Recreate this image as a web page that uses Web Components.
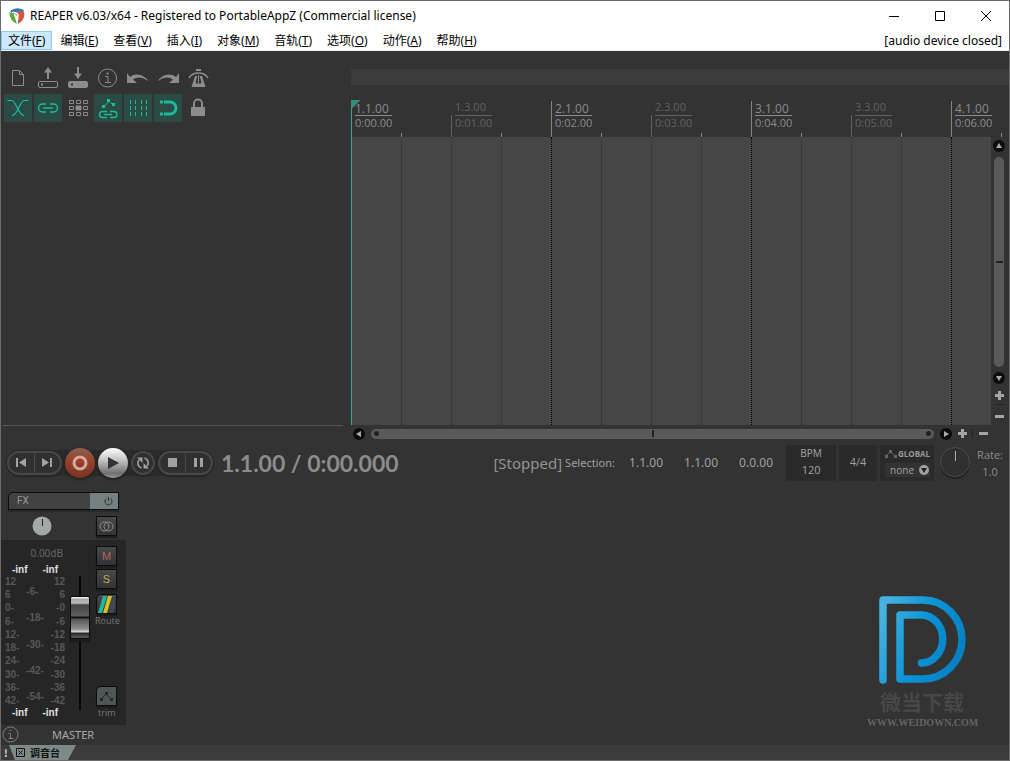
<!DOCTYPE html>
<html lang="zh-CN">
<head>
<meta charset="utf-8">
<title>REAPER</title>
<style>
html, body { height: 100%; }
body { margin: 0; background: #333; font: 12px/16px "Noto Sans", "Noto Sans CJK SC", sans-serif; }
</style>
</head>
<body>
<reaper-window></reaper-window>
<script>
const RESET = `
  *, *::before, *::after { box-sizing: border-box; }
  button { margin: 0; padding: 0; border: 0; background: none; color: inherit; font: inherit; }
  svg { display: block; }
`;

function define(name, css, html) {
  const template = document.createElement('template');
  template.innerHTML = `<style>${RESET}${css}</style>${html}`;
  customElements.define(name, class extends HTMLElement {
    constructor() {
      super();
      this.attachShadow({ mode: 'open' }).append(template.content.cloneNode(true));
    }
  });
}

/* Title bar */
define('title-bar', `
  :host { display: flex; align-items: center; height: 30px; padding-left: 8px; background: #fff; color: #000; }
  h1 { flex: 1; margin: 0 0 0 5px; font: inherit; white-space: nowrap; }
  button { display: grid; place-items: center; width: 46px; height: 28px; }
`, `
  <svg width="16" height="18" viewBox="0 0 16 18">
    <path d="M1 4Q7-1 15 3L14 6Q8 3 4 8Z" fill="#2f7fa8"/>
    <path d="M0 5L5 8L8 17Q1 14 0 5Z" fill="#58a832"/>
    <path d="M5 6Q10 3 15 5Q17 12 9 17L9 10Z" fill="#d45745"/>
    <path d="M3 5.500Q8 5 9 8L8.500 13" fill="none" stroke="#fff" stroke-width="1.500"/>
  </svg>
  <h1><slot></slot></h1>
  <button aria-label="最小化"><svg width="10" height="10"><path d="M0 5.500h10" stroke="#000"/></svg></button>
  <button aria-label="最大化"><svg width="10" height="10"><path d="M.5.5h9v9h-9z" fill="none" stroke="#000"/></svg></button>
  <button aria-label="关闭"><svg width="10" height="10"><path d="M0 0l10 10M10 0L0 10" stroke="#000"/></svg></button>
`);

/* Menu */
define('menu-item', `
  :host { display: block; }
  button { height: 19px; padding: 0 6px; border: 1px solid transparent; line-height: 17px; white-space: nowrap; }
  :host([active]) button { background: #cce8ff; border-color: #90c8f6; }
`, `<button><slot></slot></button>`);

define('menu-bar', `
  :host { display: flex; justify-content: space-between; height: 20px; background: #fff; border-bottom: 1px solid #f0f0f0; color: #000; }
  nav { display: flex; gap: 1px; }
  span { padding-right: 7px; line-height: 19px; }
`, `<nav>
  <menu-item active>文件(<u>F</u>)</menu-item><menu-item>编辑(<u>E</u>)</menu-item>
  <menu-item>查看(<u>V</u>)</menu-item><menu-item>插入(<u>I</u>)</menu-item>
  <menu-item>对象(<u>M</u>)</menu-item><menu-item>音轨(<u>T</u>)</menu-item>
  <menu-item>选项(<u>O</u>)</menu-item><menu-item>动作(<u>A</u>)</menu-item>
  <menu-item>帮助(<u>H</u>)</menu-item>
  </nav><span>[audio device closed]</span>`);

/* Main toolbar */
const icons = [
  ['新建', '', '<path d="M8.500 6.500h7l4 4v11h-11zM15.500 6.500v4h4"/>'],
  ['打开', '', '<path d="M14 15V6" stroke-width="2"/><path d="M10 8.500L14 3l4 5.500z" fill="currentColor" stroke="none"/><rect x="4.500" y="17.500" width="19" height="6" rx="1.500"/><path d="M7 20.500h2" stroke-width="2"/>'],
  ['保存', '', '<path d="M14 3v9" stroke-width="2"/><path d="M10 9.500h8L14 15z" fill="currentColor" stroke="none"/><rect x="4.500" y="17.500" width="19" height="6" rx="1.500" fill="currentColor"/><path d="M7 20.500h2" stroke="#333" stroke-width="2"/>'],
  ['工程设置', '', '<circle cx="13.500" cy="14" r="9"/><path d="M11 12.500h3v6M11 18.500h6"/><path d="M12.500 9.500h2" stroke-width="2"/>'],
  ['撤销', '', '<path d="M3 9v10h10l-4-3.500c4-3 10-3 15.500 2C21 11 12 8 6 13z" fill="currentColor" stroke="none"/>'],
  ['重做', '', '<path d="M25 9v10H15l4-3.500c-4-3-10-3-15.500 2C7 11 16 8 22 13z" fill="currentColor" stroke="none"/>'],
  ['节拍器', '', '<path d="M12 5h5v2h-5z" fill="currentColor" stroke="none"/><path d="M5 14Q8 9 14.500 9T24 14" stroke-width="1.500"/><path d="M11 12h7l3.500 11h-14z" fill="currentColor" stroke="none"/><path d="M14 11h1l2 8h-5z" fill="#333" stroke="#333"/><path d="M14.500 11v8"/>'],
  ['自动交叉淡化', 'on', '<path d="M3.500 6.500H8C12 6.500 14 21.500 20 21.500M24.500 6.500H20C16 6.500 14 21.500 8 21.500" stroke-width="1.200"/>'],
  ['项目编组', 'on', '<path d="M12 10H8.500a4 4 0 0 0 0 8H12M16 10h3.500a4 4 0 0 1 0 8H16M9 14h10" stroke-width="1.500"/>'],
  ['波纹编辑', '', '<path d="M5.500 6.500h4v3h-4zM12.500 6.500h4v3h-4zM19.500 6.500h4v3h-4zM5.500 12.500h4v3h-4zM19.500 12.500h4v3h-4zM5.500 18.500h4v3h-4zM12.500 18.500h4v3h-4zM19.500 18.500h4v3h-4z"/><path d="M12 12h5v4h-5z" fill="currentColor"/>'],
  ['包络随项目移动', 'on', '<path d="M10 13l5-6 4 4"/><path d="M8 11h3v3H8zM13 5h3v3h-3zM18 9h3v3h-3z" fill="currentColor" stroke="none"/><path d="M13 17.500H8.500a3 3 0 0 0 0 6H13M16 17.500h4a3 3 0 0 1 0 6h-4M10 20.500h8" stroke-width="1.300"/>'],
  ['网格线', 'on', '<path d="M6.500 6v16M11.500 6v16M17.500 6v16M22.500 6v16" stroke-dasharray="4 2"/>'],
  ['吸附', 'on', '<path d="M10 8h6a6 6 0 0 1 0 12h-6" stroke-width="3"/><path d="M6 8h3M6 20h3" stroke-width="3"/>'],
  ['锁定', '', '<path d="M7 13h14v9H7z" fill="currentColor" stroke="none"/><path d="M10 13V9.500a4 4 0 0 1 8 0V13" stroke-width="2"/>'],
];
define('tool-bar', `
  :host { display: grid; grid-template-columns: repeat(7, 28px); gap: 2px; padding: 13px 0 0 3px; color: #8c8c8c; }
  button { width: 28px; height: 28px; }
  .on { background: #2b4c45; color: #1abc9c; }
`, icons.map(([label, cls, art]) =>
  `<button class="${cls}" aria-label="${label}"><svg width="28" height="28" fill="none" stroke="currentColor">${art}</svg></button>`).join(''));

/* Time ruler: one cell for every two beats */
define('ruler-mark', `
  :host { flex: 0 0 100px; display: flex; flex-direction: column; justify-content: flex-end; padding: 0 0 7px 4px; color: #626262; white-space: nowrap;
    background: linear-gradient(#888,#888) 50px 100% / 1px 4px no-repeat, linear-gradient(#606060,#606060) 0 100% / 1px 22px no-repeat; }
  :host([major]) { color: #8a8a8a; background: linear-gradient(#888,#888) 50px 100% / 1px 4px no-repeat, linear-gradient(#808080,#808080) 0 100% / 1px 36px no-repeat; }
  :host([start]) { background: linear-gradient(135deg,#3c8c7d 50%,transparent 50%) 0 15px / 9px 9px no-repeat, linear-gradient(#888,#888) 50px 100% / 1px 4px no-repeat, linear-gradient(#3fa08e,#3fa08e) 0 100% / 1px 37px no-repeat; }
  b { width: 37px; border-bottom: 1px solid currentColor; font: 11px/13px "Open Sans", sans-serif; padding-bottom: 2px; }
  :host([major]) b { font-size: 12px; padding-bottom: 0; }
  span { font: 11px/14px "Open Sans", sans-serif; }
`, `<b><slot></slot></b><span><slot name="time"></slot></span>`);

define('time-ruler', `
  :host { display: flex; height: 52px; overflow: hidden; }
`, ['1.1.00', '1.3.00', '2.1.00', '2.3.00', '3.1.00', '3.3.00', '4.1.00'].map((bar, i) =>
  `<ruler-mark ${i % 2 ? '' : 'major'} ${i ? '' : 'start'}>${bar}<span slot="time">0:0${i}.00</span></ruler-mark>`).join(''));

define('arrange-view', `
  :host { display: flex; overflow: hidden; background: #464646; }
  i { flex: 0 0 50px; border-left: 1px dotted #2b2b2b; }
  i:nth-of-type(4n+1) { border-left-color: #000; }
  i:first-of-type { border-left: 1px solid #3fa08e; }
`, '<i></i>'.repeat(13));

/* Scrollbars with zoom buttons */
define('scroll-strip', `
  :host { display: flex; align-items: center; }
  :host([vertical]) { flex-direction: column; }
  button { flex: none; display: grid; place-items: center; width: 12px; height: 12px; }
  .arrow { border-radius: 50%; background: #0c0c0c; }
  .arrow svg { fill: #aaa; }
  .bar { flex: 1; display: flex; align-items: center; justify-content: space-between; height: 10px; margin: 0 6px; padding: 0 3px; border-radius: 5px; background: #5a5a5a; }
  .bar i { width: 5px; height: 5px; border-radius: 50%; background: #222; }
  .bar i:nth-child(2) { width: 2px; height: 7px; border-radius: 0; }
  .prev svg { transform: rotate(-90deg); }
  .next svg { transform: rotate(90deg); }
  .plus { margin-left: 4px; }
  .sep { width: 1px; height: 9px; margin: 0 4px; background: #222; }
  :host([vertical]) .bar { flex-direction: column; width: 10px; height: auto; margin: 5px 0; padding: 3px 0; }
  :host([vertical]) .bar i { visibility: hidden; }
  :host([vertical]) .bar i:nth-child(2) { visibility: visible; width: 7px; height: 2px; }
  :host([vertical]) .prev svg { transform: none; }
  :host([vertical]) .next svg { transform: rotate(180deg); }
  :host([vertical]) .plus { margin: 5px 0 0; }
  :host([vertical]) .sep { width: 9px; height: 1px; margin: 3px 0 5px; }
`, `
  <button class="arrow prev" aria-label="后退"><svg width="6" height="6"><path d="M3 0l3 5H0z"/></svg></button>
  <div class="bar"><i></i><i></i><i></i></div>
  <button class="arrow next" aria-label="前进"><svg width="6" height="6"><path d="M3 0l3 5H0z"/></svg></button>
  <button class="plus" aria-label="放大"><svg width="9" height="9"><path d="M3 0h3v3h3v3H6v3H3V6H0V3h3z" fill="#a5a5a5"/></svg></button>
  <span class="sep"></span>
  <button aria-label="缩小"><svg width="9" height="3"><path d="M0 0h9v3H0z" fill="#a5a5a5"/></svg></button>
`);

/* Transport */
define('transport-bar', `
  :host { display: flex; align-items: center; height: 45px; padding: 0 6px; color: #a0a0a0; white-space: nowrap; }
  .keys { display: flex; align-items: center; gap: 3px; color: #a2a2a2; background: linear-gradient(#2a2a2a,#2a2a2a) 45px center / 120px 26px no-repeat; }
  button { display: grid; place-items: center; }
  .pill { display: flex; border: 2px solid #484848; border-radius: 12px; box-shadow: 0 2px 1px #262626, 0 0 0 1px #292929; background: #303030; }
  .pill button { width: 25px; height: 20px; }
  .pill button + button { border-left: 1px solid #484848; width: 26px; }
  .round { width: 30px; height: 30px; border-radius: 50%; box-shadow: 0 1px 2px 1px #222; }
  .rec { background: linear-gradient(#8e6052, #96402c 45%, #7a3121); }
  .play { background: linear-gradient(#fff, #c4c4c4 40%, #707070 85%, #999); }
  .loop { width: 24px; height: 24px; border: 2px solid #484848; border-radius: 50%; background: #303030; box-shadow: 0 2px 1px #262626; }
  output.time { margin-left: 8px; font: bold 23px/30px "Lato", sans-serif; color: #8c8c8c; }
  .state { display: flex; align-items: center; margin-left: auto; font-size: 11px; }
  .state b { margin-right: 3px; font: 15px/20px "Noto Sans", sans-serif; color: #929292; }
  .state span { width: 64px; }
  .state output { width: 55px; font-size: 12px; }
  .state output:last-child { width: 47px; }
  .panels { display: flex; gap: 3px; }
  .box { height: 36px; border-radius: 2px; background: #2a2a2a; text-align: center; font-size: 11px; }
  .bpm { width: 50px; line-height: 18px; }
  .bpm label { display: block; font-size: 10px; line-height: 17px; }
  input { width: 40px; padding: 0; border: 0; background: none; color: inherit; font: 11px/16px "Open Sans", sans-serif; text-align: center; display: block; margin: 0 auto; height: 16px; }
  .sig { width: 38px; }
  .sig input { width: 100%; height: 34px; }
  .env { width: 54px; padding: 3px 4px 0 5px; }
  .env label { display: flex; justify-content: space-between; font: bold 8px/12px "Open Sans", sans-serif; align-items: center; color: #999; }
  .drop { display: flex; align-items: center; margin-top: 3px; padding: 0 0 0 5px; height: 14px; background: #333; }
  .drop svg { flex: none; }
  select { appearance: none; flex: 1; min-width: 0; padding: 0; border: 0; background: none; color: #a0a0a0; font: 10px/14px "Open Sans", sans-serif; }
  .knob { margin: 0 7px 0 6px; }
  .rate { text-align: center; font: 11px/17px "Open Sans", sans-serif; color: #8c8c8c; }
`, `
  <div class="keys">
    <div class="pill">
      <button aria-label="转到开头"><svg width="11" height="9"><path d="M0 0h2v9H0zM10 0v9L3 4.500z" fill="currentColor"/></svg></button>
      <button aria-label="转到结尾"><svg width="11" height="9"><path d="M8 0h2v9H8zM0 0v9l7-4.500z" fill="currentColor"/></svg></button>
    </div>
    <button class="round rec" aria-label="录音"><svg width="16" height="16"><circle cx="8" cy="8" r="6" fill="none" stroke="#d8aa9e" stroke-width="3"/></svg></button>
    <button class="round play" aria-label="播放"><svg width="12" height="12"><path d="M1 0l11 6-11 6z" fill="#333"/></svg></button>
    <button class="loop" aria-label="循环"><svg width="14" height="14" fill="none" stroke="currentColor" stroke-width="1.700"><path d="M5.500 12A5 5 0 0 1 3 4M8.500 2a5 5 0 0 1 2.500 8"/><path d="M1 1.500h5.500V7zM13 12.500H7.500V7z" fill="currentColor" stroke="none"/></svg></button>
    <div class="pill">
      <button aria-label="停止"><svg width="9" height="9"><path d="M0 0h9v9H0z" fill="currentColor"/></svg></button>
      <button aria-label="暂停"><svg width="9" height="9"><path d="M0 0h3v9H0zM6 0h3v9H6z" fill="currentColor"/></svg></button>
    </div>
  </div>
  <output class="time">1.1.00 / 0:00.000</output>
  <div class="state"><b>[Stopped]</b><span>Selection:</span><output>1.1.00</output><output>1.1.00</output><output>0.0.00</output></div>
  <div class="panels">
    <div class="box bpm"><label for="bpm">BPM</label><input id="bpm" value="120"></div>
    <div class="box sig"><input aria-label="拍号" value="4/4"></div>
    <div class="box env">
      <label for="mode"><svg width="12" height="8"><path d="M1 6l4-4 3 2 3 3" fill="none" stroke="#666"/><path d="M0 5h3v3H0zM4 0h3v3H4zM9 5h3v3H9z" fill="#666"/></svg>GLOBAL</label>
      <div class="drop"><select id="mode"><option>none</option></select><svg width="12" height="12"><circle cx="6" cy="6" r="5" fill="#a0a0a0"/><path d="M3 4h6L6 9z" fill="#222"/></svg></div>
    </div>
  </div>
  <svg class="knob" width="30" height="32"><circle cx="15" cy="17" r="14" fill="none" stroke="#222" stroke-width="2"/><circle cx="15" cy="15" r="14.500" fill="#303030" stroke="#4c4c4c"/><path d="M15.500 4v10" stroke="#aaa"/></svg>
  <div class="rate">Rate:<br>1.0</div>
`);

/* Level meter with its two outer scales and the middle one */
const col = (cls, items) => `<div class="${cls}">${items.map(t => `<span>${t}</span>`).join('')}</div>`;
define('level-meter', `
  :host { display: block; width: 60px; color: #585858; font: bold 10px/12px "Liberation Sans", sans-serif; }
  .peak { display: flex; justify-content: center; gap: 15px; color: #e0e0e0; line-height: 12px; }
  .scale { display: grid; grid-template-columns: 1fr auto 1fr; height: 131px; }
  .scale div { display: flex; flex-direction: column; justify-content: space-between; }
  .mid { padding: 10px 0 4px; }
  .r { text-align: right; }
  .low { line-height: 11px; }
`, `
  <div class="peak"><span>-inf</span><span>-inf</span></div>
  <div class="scale">
    ${col('l', ['12', '6', '0-', '6-', '12-', '18-', '24-', '30-', '36-', '42-'])}
    ${col('mid', ['-6-', '-18-', '-30-', '-42-', '-54-'])}
    ${col('r', ['12', '6', '-0', '-6', '-12', '-18', '-24', '-30', '-36', '-42'])}
  </div>
  <div class="peak low"><span>-inf</span><span>-inf</span></div>
`);

/* Master track strip */
define('master-strip', `
  :host { display: block; width: 125px; color: #a8a8a8; }
  header { display: grid; grid-template-columns: 67px 43px; row-gap: 6px; height: 55px; padding: 7px 0 0 7px; align-content: start; align-items: center; }
  .fx { grid-column: 1 / 3; display: flex; width: 111px; height: 18px; border: 1px solid #0c0c0c; border-radius: 5px 0 0 0; background: #424242; box-shadow: 0 2px 1px #292929; color: #8f9b9a; font: 10px/16px "Roboto", sans-serif; }
  .fx button:first-child { flex: 1; padding-left: 8px; text-align: left; }
  .fx button:last-child { width: 28px; display: grid; place-items: center; padding-left: 8px; background: #748180; color: #2d3333; }
  .pan { justify-self: center; }
  .sq { display: grid; place-items: center; width: 21px; height: 20px; border: 1px solid #0c0c0c; background: linear-gradient(#484848, #333); box-shadow: 0 2px 1px #1d1d1d; font: 11px/18px "Liberation Sans", sans-serif; }
  header .sq { margin-left: 21px; }
  .body { display: flex; height: 185px; background: #262626; padding-left: 4px; }
  .left { width: 64px; }
  .db { display: block; margin: 7px 0 5px; text-align: right; padding-right: 6px; font-size: 10px; line-height: 12px; color: #666; }
  input { appearance: none; writing-mode: vertical-lr; direction: rtl; width: 22px; height: 134px; margin: 36px 0 0; background: linear-gradient(#080808,#080808) center / 2px 100% no-repeat; }
  input::-webkit-slider-thumb { appearance: none; width: 20px; height: 43px; border: 1px solid #0a0a0a; border-radius: 2px; box-shadow: 0 3px 1px #1a1a1a;
    background: linear-gradient(#eee 0 1px, #a5a5a5 2px, #bbb 6px, #444 8px, #606060 19px, #111 20px 21px, #555 22px, #8f8f8f 32px, #ddd 35px, #222 36px, #555 40px); }
  .right { width: 26px; margin-left: 4px; padding-top: 6px; display: flex; flex-direction: column; color: #777; }
  .m { color: #b06464; } .s { color: #b4b450; margin: 3px 0 5px; }
  .right .sq { margin-left: 1px; }
  .right .cut { border-radius: 5px 0 0 0; flex: none; }
  .right .trim { margin-top: 58px; background: #505656; }
  small { font: 9px/14px "Open Sans", sans-serif; }
  small.t { margin-left: 3px; }
  footer { display: flex; align-items: center; height: 19px; padding-left: 1px; line-height: 18px; }
  footer b { margin-left: 33px; font-weight: normal; font-size: 11px; }
`, `
  <header>
    <div class="fx"><button>FX</button><button aria-label="旁通效果"><svg width="9" height="9" fill="none" stroke="currentColor"><path d="M4.500 0v4M2.500 1.500a3.500 3.500 0 1 0 4 0"/></svg></button></div>
    <svg class="pan" width="20" height="20" role="img" aria-label="声像"><circle cx="10" cy="10" r="9.500" fill="#a4a8a8"/><path d="M10.500 3v7" stroke="#222"/></svg>
    <button class="sq" aria-label="立体声"><svg width="15" height="11" fill="none" stroke="#909090"><circle cx="5.500" cy="5.500" r="4.500"/><circle cx="9.500" cy="5.500" r="4.500"/></svg></button>
  </header>
  <div class="body">
    <div class="left"><output class="db">0.00dB</output><level-meter></level-meter></div>
    <input type="range" min="0" max="90" value="70" aria-label="音量">
    <div class="right">
      <button class="sq m">M</button><button class="sq s">S</button>
      <button class="sq cut" aria-label="路由"><svg width="17" height="17"><path d="M5 0h4L4 17H0z" fill="#1abc9c"/><path d="M10 0h4L9 17H5z" fill="#d8c02c"/><path d="M15 0h2v10l-2 7h-5z" fill="#3c4a54"/></svg></button>
      <small>Route</small>
      <button class="sq cut trim" aria-label="包络"><svg width="13" height="9"><path d="M1 7l5-5 5 5" fill="none" stroke="#252828"/><path d="M0 6h3v3H0zM5 0h3v3H5zM10 6h3v3h-3z" fill="#252828"/></svg></button>
      <small class="t">trim</small>
    </div>
  </div>
  <footer><svg width="17" height="17" fill="none" stroke="#7c7c7c"><circle cx="8.500" cy="8.500" r="7.500"/><path d="M6.500 7.500h2v5M6.500 12.500h5M7.500 4.500h2"/></svg><b>MASTER</b></footer>
`);

define('site-mark', `
  :host { display: block; width: 110px; text-align: center; color: #474747; white-space: nowrap; }
  svg { margin: 0 auto; }
  strong { display: block; margin-top: 1px; font: bold 21px/30px "Noto Sans CJK SC", sans-serif; }
  span { display: block; font: bold 10px/14px "Liberation Serif", serif; color: #646464; }
`, `
  <svg width="88" height="90" viewBox="877 595 88 90" role="img" aria-label="D">
    <linearGradient id="g" gradientUnits="userSpaceOnUse" x1="880" y1="620" x2="962" y2="650"><stop stop-color="#45b1e1"/><stop offset=".5" stop-color="#0a94d6"/><stop offset="1" stop-color="#0580c2"/></linearGradient>
    <path d="M882 680V600H922A39 39.500 0 0 1 922 679H899V615H920A21.500 24 0 0 1 920.500 663" fill="none" stroke="url(#g)" stroke-width="7.500" stroke-linecap="round" stroke-linejoin="round"/>
  </svg>
  <strong>微当下载</strong><span>WWW.WEIDOWN.COM</span>
`);

define('dock-tabs', `
  :host { display: flex; height: 15px; background: #3b3b3b; color: #ddd; font: bold 10px/15px "Noto Sans CJK SC", sans-serif; }
  span { width: 8px; padding-left: 3px; }
  button { display: flex; align-items: center; gap: 5px; width: 67px; padding-left: 7px; background: #7d8a88; color: #111; clip-path: polygon(0 0, 100% 0, 59px 100%, 6px 100%); white-space: nowrap; }
`, `<span>!</span><button><svg width="9" height="9" fill="none" stroke="currentColor"><path d="M.5.5h8v8h-8zM2.500 2.500l4 4M6.500 2.500l-4 4"/></svg><slot></slot></button>`);

define('reaper-window', `
  :host { box-sizing: border-box; display: flex; flex-direction: column; min-height: 100vh; border: 1px solid #6b6b6b; background: #333; }
  .edit { flex: 1; display: grid; grid-template-columns: 350px minmax(0, 1fr); }
  .tracks { display: flex; flex-direction: column; justify-content: space-between; }
  .tracks hr { width: 340px; height: 1px; margin: 0 0 14px 2px; border: 0; background: #555; }
  .time { display: grid; grid-template: 16px 52px minmax(0, 1fr) 15px / minmax(0, 1fr) 18px; padding-top: 18px; }
  .nav { background: #3c3c3c; }
  .nav, time-ruler { grid-column: 1 / 3; }
  .v { padding: 3px 2px 3px 0; }
  .h { grid-column: 1 / 3; padding: 2px 20px 0 2px; }
  .mixer { display: flex; justify-content: space-between; height: 260px; }
  site-mark { margin: 110px 32px 0 0; }
`, `
  <title-bar>REAPER v6.03/x64 - Registered to PortableAppZ (Commercial license)</title-bar>
  <menu-bar></menu-bar>
  <section class="edit">
    <div class="tracks"><tool-bar></tool-bar><hr></div>
    <div class="time">
      <div class="nav"></div><time-ruler></time-ruler>
      <arrange-view></arrange-view><scroll-strip class="v" vertical></scroll-strip>
      <scroll-strip class="h"></scroll-strip>
    </div>
  </section>
  <transport-bar></transport-bar>
  <section class="mixer"><master-strip></master-strip><site-mark></site-mark></section>
  <dock-tabs>调音台</dock-tabs>
`);
</script>
</body>
</html>
